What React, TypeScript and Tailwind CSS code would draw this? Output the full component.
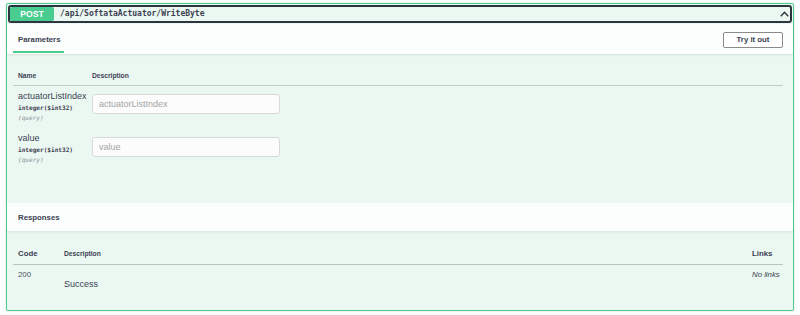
import React from "react";

const sans = "font-['Liberation_Sans',Arial,sans-serif]";
const mono = "font-['DejaVu_Sans_Mono',monospace]";

const params = [
  { name: "actuatorListIndex", type: "integer($int32)", where: "(query)", top: "pt-[5px]", inputTop: "mt-[3px]" },
  { name: "value", type: "integer($int32)", where: "(query)", top: "pt-[11px]", inputTop: "mt-[4px]" },
];

export default function App() {
  return (
    <div className={`w-[800px] h-[315px] bg-white pt-[3px] px-[6px] text-[#3b4151] ${sans}`}>
      <div className="h-[308px] w-[788px] border border-[#49cc90] rounded-[2px] bg-[#ebf8f2] shadow-[0_0_2px_rgba(0,0,0,0.19)] flex flex-col">
        {/* Summary */}
        <div className="mx-[1px] mt-[1px] h-[18px] border-2 border-[#2e3340] rounded-[3px] flex items-center pr-[1px]">
          <div className="w-[44px] h-[14px] bg-[#49cc90] rounded-[2px] flex items-center justify-center text-white font-bold text-[8.6px] leading-none">
            POST
          </div>
          <span className={`${mono} ml-[6px] text-[8px] font-semibold leading-none text-[#3b4151]`}>
            /api/SoftataActuator/WriteByte
          </span>
          <div className="flex-1" />
          <svg width="9" height="6" viewBox="0 0 9 6" className="mb-[1px]">
            <path d="M0.8 5.2 L4.5 1.3 L8.2 5.2" fill="none" stroke="#2e3340" strokeWidth="1.4" />
          </svg>
        </div>

        {/* Parameters tab header */}
        <div className="mt-[1px] h-[30px] bg-[#fcfefd] shadow-[0_1px_2px_rgba(0,0,0,0.1)] flex items-start justify-between">
          <div className="ml-[6px] w-[51px] h-[29px] border-b-2 border-[#49cc90] pl-[5px] pt-[11px]">
            <span className="block text-[7.8px] font-bold leading-[10px]">Parameters</span>
          </div>
          <button className="mt-[8px] mr-[10px] w-[60px] h-[16px] border border-[#8a8a8a] rounded-[2px] bg-white text-[7.8px] font-bold leading-none text-[#3b4151]">
            Try it out
          </button>
        </div>

        {/* Parameters table */}
        <div className="h-[149px] pt-[17px] pl-[6px] pr-[10px]">
          <div className="flex pb-[4px] border-b border-[#c3cac7] text-[6.7px] font-bold leading-[10px]">
            <div className="w-[79px] pl-[5px]">Name</div>
            <div>Description</div>
          </div>
          {params.map((p) => (
            <div key={p.name} className={`flex items-start ${p.top}`}>
              <div className="w-[79px] pl-[5px] flex flex-col">
                <span className="text-[9px] leading-[11px]">{p.name}</span>
                <span className={`${mono} mt-[2px] text-[6.1px] font-bold leading-[8px]`}>{p.type}</span>
                <span className={`${mono} mt-[2px] text-[6.1px] italic leading-[8px] text-[#8a8e96]`}>{p.where}</span>
              </div>
              <input
                readOnly
                placeholder={p.name}
                className={`${p.inputTop} w-[188px] h-[20px] border border-[#d9d9d9] rounded-[3px] bg-[#fcfcfc] px-[6px] text-[9px] text-[#3b4151] placeholder:text-[#a3a3a3] outline-none`}
              />
            </div>
          ))}
        </div>

        {/* Responses header */}
        <div className="h-[29px] bg-[#fcfefd] border-b border-[#dde9e4] flex items-center pl-[11px] pt-[2px] shadow-[0_1px_2px_rgba(0,0,0,0.05)]">
          <span className="text-[7.8px] font-bold leading-[10px]">Responses</span>
        </div>

        {/* Responses table */}
        <div className="pt-[17px] pl-[6px] pr-[10px]">
          <div className="flex items-center pb-[5px] border-b border-[#bac3c0] leading-[10px] font-bold">
            <div className="w-[51px] pl-[5px] text-[7.8px]">Code</div>
            <div className="flex-1 text-[6.7px]">Description</div>
            <div className="w-[31px] text-[7.8px]">Links</div>
          </div>
          <div className="flex items-start">
            <div className="w-[51px] pl-[5px] pt-[5px] text-[7.8px] leading-[10px] text-[#4a4f5c]">200</div>
            <div className="flex-1 pt-[14px] text-[9px] leading-[11px] text-[#3b4151]">Success</div>
            <div className="w-[31px] pt-[5px] text-[7.8px] italic leading-[10px]">No links</div>
          </div>
        </div>
      </div>
    </div>
  );
}
